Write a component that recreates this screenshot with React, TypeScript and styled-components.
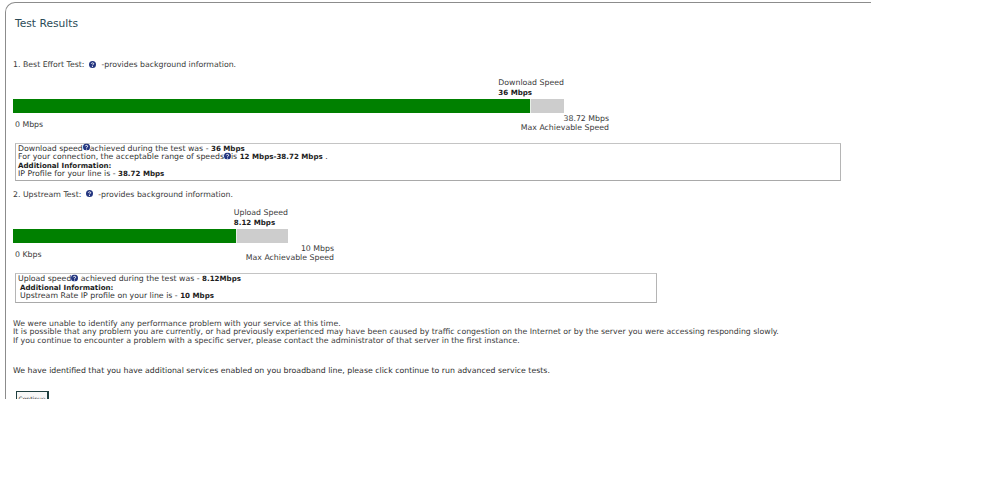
import React from 'react'
import styled, { createGlobalStyle } from 'styled-components'

const GlobalStyle = createGlobalStyle`
  html, body {
    margin: 0;
    padding: 0;
    background: #fff;
  }
`

const Page = styled.div`
  width: 999px;
  height: 486px;
  overflow: hidden;
  background: #fff;
  padding: 2px 0 0 5px;
  box-sizing: border-box;
  color: #3a3a3a;
  font-family: "DejaVu Sans", Verdana, sans-serif;
  font-size: 7.8px;
  line-height: 8.5px;
`

const Panel = styled.div`
  width: 866px;
  height: 397px;
  box-sizing: border-box;
  overflow: hidden;
  border-top: 1px solid #8c8c8c;
  border-left: 1px solid #8c8c8c;
  border-top-left-radius: 10px;
  padding: 14px 0 0 7px;
`

const Title = styled.h1`
  margin: 0 0 31px 2px;
  color: #2b4b57;
  font-size: 10.7px;
  font-weight: 400;
  line-height: 13px;
`

const Intro = styled.p<{ $after: number }>`
  display: flex;
  align-items: center;
  margin: 0 0 ${({ $after }) => $after}px;
  white-space: pre;
`

const Meter = styled.div<{ $width: number }>`
  display: flex;
  flex-direction: column;
  width: ${({ $width }) => $width}px;
`

const MeterLabel = styled.div`
  align-self: flex-end;
  width: fit-content;
  line-height: 10px;
  white-space: nowrap;
  margin-bottom: 1px;
`

const Track = styled.div`
  height: 14px;
  background: #cdcdcd;
`

const Fill = styled.div`
  height: 100%;
  background: #008000;
  border-right: 1px solid #e6efe6;
  box-sizing: border-box;
`

const Scale = styled.div<{ $width: number }>`
  display: flex;
  justify-content: space-between;
  align-items: center;
  width: ${({ $width }) => $width}px;
  margin-top: 1px;
  padding-left: 2px;
  box-sizing: border-box;
  line-height: 9px;
`

const ScaleMin = styled.span`
  padding-top: 3px;
`

const ScaleMax = styled.div`
  text-align: right;
`

const InfoBox = styled.div<{ $width: number; $after: number }>`
  width: ${({ $width }) => $width}px;
  margin: 11px 0 ${({ $after }) => $after}px 2px;
  padding: 1px 2px;
  box-sizing: border-box;
  border: 1px solid #b5b5b5;
  border-top-color: #c4c4c4;
  border-bottom-color: #a9a9a9;
  color: #333;
`

const Line = styled.div<{ $indent?: boolean }>`
  display: flex;
  align-items: center;
  white-space: pre;
  padding-left: ${({ $indent }) => ($indent ? 2 : 0)}px;
`

const Strong = styled.strong`
  color: #1c1c1c;
  font-size: 7.1px;
  font-weight: 700;
`

const Notes = styled.div`
  margin-bottom: 22px;
`

const Notice = styled.p`
  margin: 0 0 15px;
  color: #2e2e2e;
`

const ContinueButton = styled.button`
  display: block;
  width: 33px;
  height: 22px;
  margin-left: 3px;
  padding: 0 0 6px;
  border: 1px solid #1f3f3f;
  border-right-width: 2px;
  background: #f7f7f7;
  color: #333;
  font-family: inherit;
  font-size: 6px;
  line-height: 10px;
  text-align: center;
`

const IconSvg = styled.svg<{ $lift: number }>`
  flex: none;
  transform: translateY(${({ $lift }) => -$lift}px);
`

const HelpIcon = ({ lift = 1 }: { lift?: number }) => (
  <IconSvg $lift={lift} width={7} height={7} viewBox="0 0 14 14" aria-hidden="true">
    <circle cx="7" cy="7" r="7" fill="#23357f" />
    <path d="M4.6 5.4C4.8 3.2 9.4 3.1 9.4 5.5 9.4 7.2 7 7 7 8.8" fill="none" stroke="#fff" strokeWidth="1.9" />
    <circle cx="7" cy="11" r="1.2" fill="#fff" />
  </IconSvg>
)

const App = () => (
  <>
    <GlobalStyle />
    <Page>
      <Panel>
        <Title>Test Results</Title>

        <Intro $after={8}>1. Best Effort Test:  <HelpIcon />  -provides background information.</Intro>
        <Meter $width={551}>
          <MeterLabel>
            Download Speed
            <br />
            <Strong>36 Mbps</Strong>
          </MeterLabel>
          <Track>
            <Fill style={{ width: '94%' }} />
          </Track>
        </Meter>
        <Scale $width={596}>
          <ScaleMin>0 Mbps</ScaleMin>
          <ScaleMax>
            38.72 Mbps
            <br />
            Max Achievable Speed
          </ScaleMax>
        </Scale>
        <InfoBox $width={826} $after={10}>
          <Line>Download speed<HelpIcon lift={1.5} />achieved during the test was - <Strong>36 Mbps</Strong></Line>
          <Line>For your connection, the acceptable range of speeds<HelpIcon lift={1.5} />is <Strong>12 Mbps-38.72 Mbps</Strong> .</Line>
          <Line><Strong>Additional Information:</Strong></Line>
          <Line>IP Profile for your line is - <Strong>38.72 Mbps</Strong></Line>
        </InfoBox>

        <Intro $after={9}>2. Upstream Test:  <HelpIcon />  -provides background information.</Intro>
        <Meter $width={275}>
          <MeterLabel>
            Upload Speed
            <br />
            <Strong>8.12 Mbps</Strong>
          </MeterLabel>
          <Track>
            <Fill style={{ width: '81.5%' }} />
          </Track>
        </Meter>
        <Scale $width={321}>
          <ScaleMin>0 Kbps</ScaleMin>
          <ScaleMax>
            10 Mbps
            <br />
            Max Achievable Speed
          </ScaleMax>
        </Scale>
        <InfoBox $width={642} $after={17}>
          <Line>Upload speed<HelpIcon lift={1.5} /> achieved during the test was - <Strong>8.12Mbps</Strong></Line>
          <Line $indent><Strong>Additional Information:</Strong></Line>
          <Line $indent>Upstream Rate IP profile on your line is - <Strong>10 Mbps</Strong></Line>
        </InfoBox>

        <Notes>
          We were unable to identify any performance problem with your service at this time.
          <br />
          It is possible that any problem you are currently, or had previously experienced may have been caused by traffic congestion on the Internet or by the server you were accessing responding slowly.
          <br />
          If you continue to encounter a problem with a specific server, please contact the administrator of that server in the first instance.
        </Notes>
        <Notice>We have identified that you have additional services enabled on you broadband line, please click continue to run advanced service tests.</Notice>
        <ContinueButton>Continue</ContinueButton>
      </Panel>
    </Page>
  </>
)

export default App
